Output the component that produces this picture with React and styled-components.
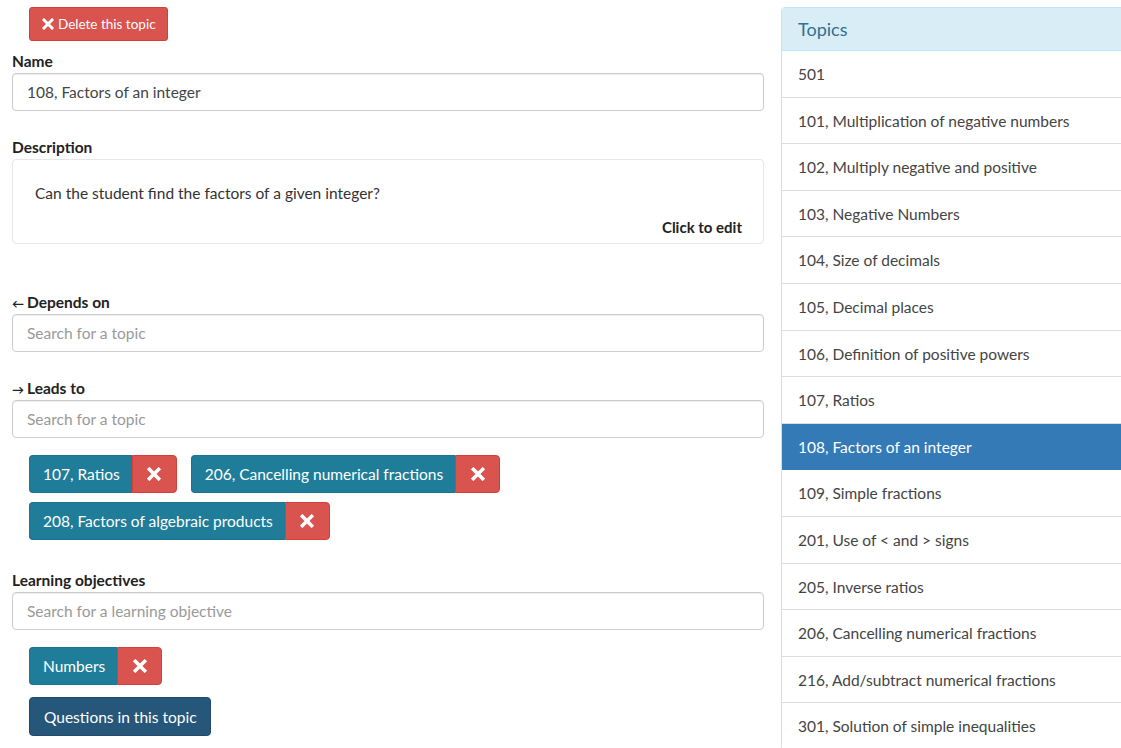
import React from 'react';
import styled, { createGlobalStyle } from 'styled-components';

const GlobalStyle = createGlobalStyle`
  html, body {
    margin: 0;
    padding: 0;
    background: #fff;
    overflow: hidden;
  }
  body {
    font-family: Lato, "Source Sans Pro", "Noto Sans", sans-serif;
    font-size: 15.5px;
    color: #333;
  }
  * { box-sizing: border-box; }
`;

const Page = styled.div`
  display: flex;
  align-items: flex-start;
  padding-top: 7px;
  width: 1400px;
`;

const Editor = styled.div`
  width: 752px;
  margin-left: 12px;
  display: flex;
  flex-direction: column;
`;

const DeleteButton = styled.button`
  align-self: flex-start;
  margin-left: 17px;
  height: 34px;
  padding: 0 11px 0 12px;
  display: flex;
  align-items: center;
  gap: 4px;
  font-family: inherit;
  font-size: 13.5px;
  color: #fff;
  background: #d9534f;
  border: 1px solid #d43f3a;
  border-radius: 3px;
`;

const Label = styled.label`
  display: block;
  font-weight: 700;
  line-height: 20px;
  height: 20px;
  margin-top: ${p => p.$top}px;
  margin-bottom: 2px;
  color: #222;
`;

const Arrow = styled.span`
  display: inline-block;
  font-size: 12px;
  line-height: 1;
  font-weight: 700;
  margin-right: 3px;
`;

const Input = styled.input`
  display: block;
  width: 100%;
  height: 38px;
  padding: 0 14px;
  font-family: inherit;
  font-size: 15.5px;
  color: #444;
  border: 1px solid #ccc;
  border-radius: 4px;
  box-shadow: inset 0 1px 1px rgba(0, 0, 0, 0.075);
  &::placeholder { color: #999; }
`;

const DescriptionBox = styled.div`
  border: 1px solid #e6e6e6;
  border-radius: 4px;
  padding: 23px 21px 6px 22px;
  line-height: 20px;
  color: #333;
`;

const EditHint = styled.div`
  margin-top: 14px;
  text-align: right;
  font-weight: 700;
  font-size: 15px;
  color: #222;
`;

const TagList = styled.div`
  display: flex;
  flex-wrap: wrap;
  gap: 9px 14px;
  margin-top: ${p => p.$top}px;
  padding-left: 17px;
`;

const Tag = styled.div`
  display: flex;
  height: 38px;
`;

const TagName = styled.span`
  display: flex;
  align-items: center;
  padding: 0 12px 0 13px;
  color: #fff;
  background: #1f7d9a;
  border: 1px solid #1b7390;
  border-right: none;
  border-radius: 4px 0 0 4px;
`;

const TagRemove = styled.button`
  width: 45px;
  display: flex;
  align-items: center;
  justify-content: center;
  color: #fff;
  background: #d9534f;
  border: 1px solid #d43f3a;
  border-radius: 0 4px 4px 0;
  padding: 0;
`;

const QuestionsButton = styled.button`
  align-self: flex-start;
  margin: 12px 0 0 17px;
  height: 39px;
  padding: 0 13px 0 14px;
  font-family: inherit;
  font-size: 15.5px;
  color: #fff;
  background: #26567a;
  border: 1px solid #1f4a6b;
  border-radius: 4px;
`;

const Panel = styled.div`
  margin-left: 17px;
  width: 420px;
  border: 1px solid #bce8f1;
  border-radius: 4px 0 0 4px;
`;

const PanelHeading = styled.div`
  height: 43px;
  display: flex;
  align-items: center;
  padding: 0 16px;
  font-size: 18px;
  color: #31708f;
  background: #d9edf7;
  border-bottom: 1px solid #bce8f1;
`;

const Item = styled.div`
  padding: 11px 16px 9px;
  line-height: 25.6px;
  color: ${p => (p.$active ? '#fff' : '#444')};
  background: ${p => (p.$active ? '#337ab7' : '#fff')};
  border-bottom: 1px solid ${p => (p.$active ? '#337ab7' : '#ddd')};
`;

const Cross = ({ size = 12 }) => (
  <svg width={size} height={size} viewBox="0 0 12 12" aria-hidden="true">
    <path d="M2 2 L10 10 M10 2 L2 10" stroke="#fff" strokeWidth="3" strokeLinecap="square" />
  </svg>
);

const leadsTo = ['107, Ratios', '206, Cancelling numerical fractions', '208, Factors of algebraic products'];

const topics = [
  '501',
  '101, Multiplication of negative numbers',
  '102, Multiply negative and positive',
  '103, Negative Numbers',
  '104, Size of decimals',
  '105, Decimal places',
  '106, Definition of positive powers',
  '107, Ratios',
  '108, Factors of an integer',
  '109, Simple fractions',
  '201, Use of < and > signs',
  '205, Inverse ratios',
  '206, Cancelling numerical fractions',
  '216, Add/subtract numerical fractions',
  '301, Solution of simple inequalities',
];

const TagItem = ({ name }) => (
  <Tag>
    <TagName>{name}</TagName>
    <TagRemove><Cross size={14} /></TagRemove>
  </Tag>
);

export default function App() {
  return (
    <>
      <GlobalStyle />
      <Page>
        <Editor>
          <DeleteButton><Cross /> Delete this topic</DeleteButton>

          <Label $top={10}>Name</Label>
          <Input defaultValue="108, Factors of an integer" />

          <Label $top={26}>Description</Label>
          <DescriptionBox>
            Can the student find the factors of a given integer?
            <EditHint>Click to edit</EditHint>
          </DescriptionBox>

          <Label $top={48}><Arrow>←</Arrow>Depends on</Label>
          <Input placeholder="Search for a topic" />

          <Label $top={26}><Arrow>→</Arrow>Leads to</Label>
          <Input placeholder="Search for a topic" />
          <TagList $top={17}>
            {leadsTo.map(t => <TagItem key={t} name={t} />)}
          </TagList>

          <Label $top={30}>Learning objectives</Label>
          <Input placeholder="Search for a learning objective" />
          <TagList $top={17}>
            <TagItem name="Numbers" />
          </TagList>

          <QuestionsButton>Questions in this topic</QuestionsButton>
        </Editor>

        <Panel>
          <PanelHeading>Topics</PanelHeading>
          {topics.map(t => (
            <Item key={t} $active={t === '108, Factors of an integer'}>{t}</Item>
          ))}
        </Panel>
      </Page>
    </>
  );
}
